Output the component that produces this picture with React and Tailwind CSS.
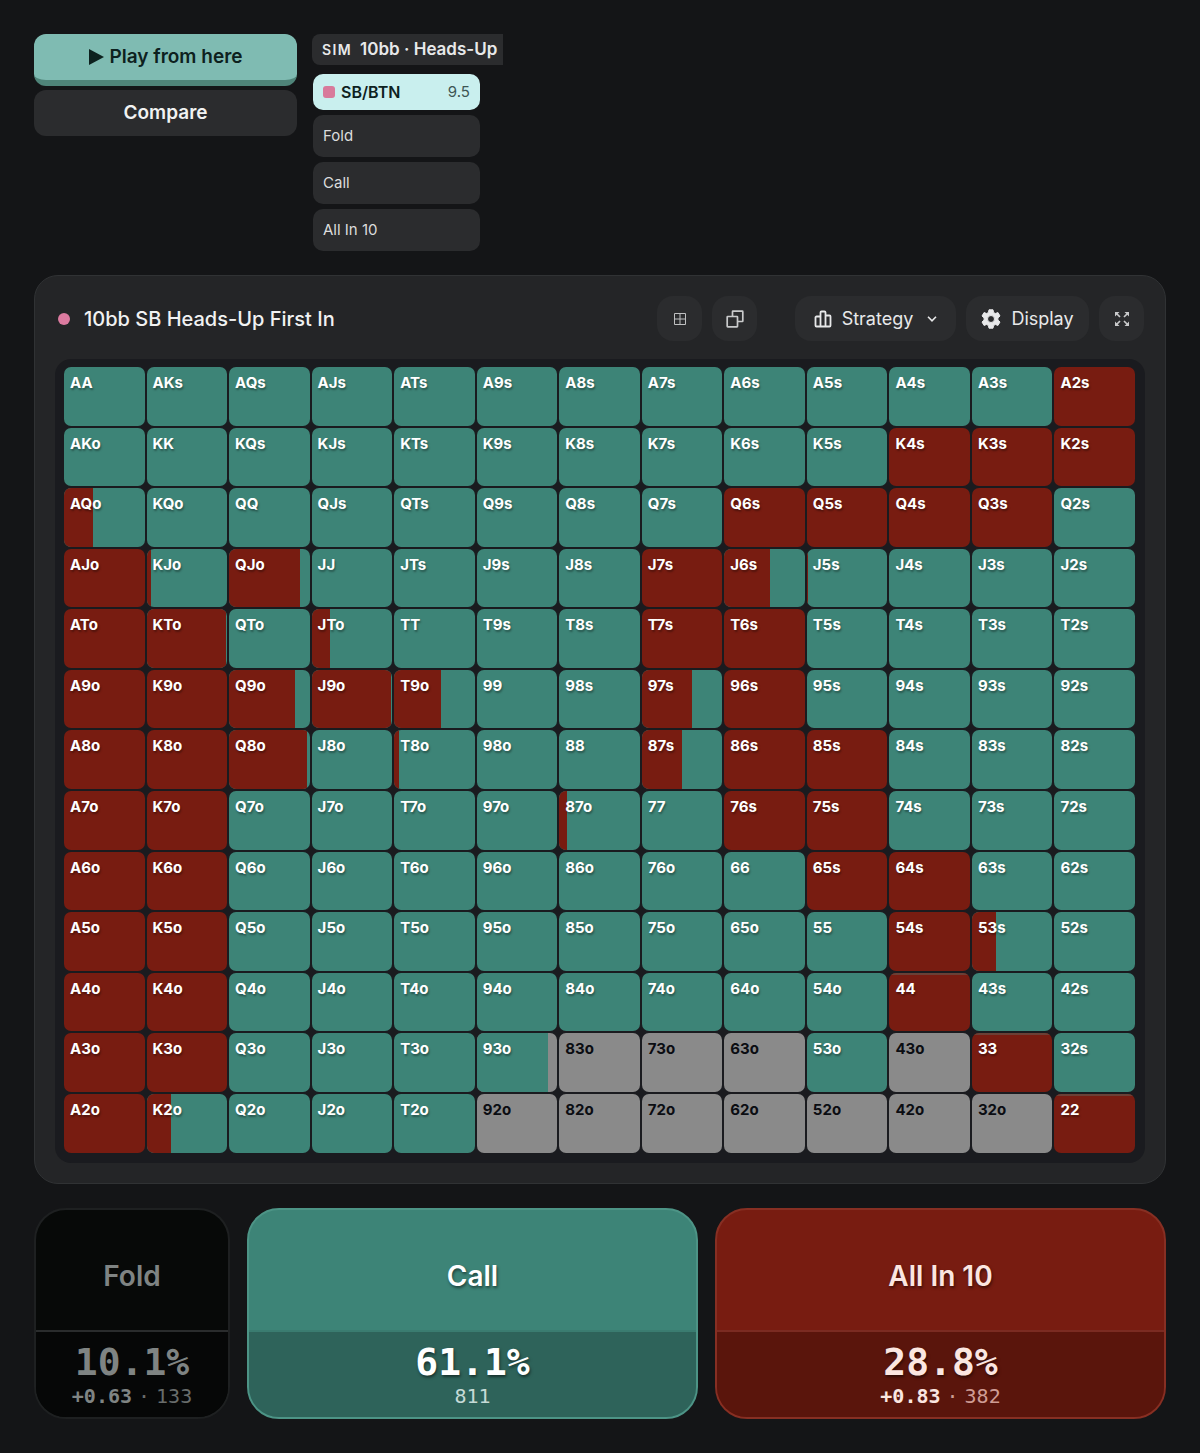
import React from "react";

const RANKS = "AKQJT98765432".split("");

// First letter of each action, row by row: c = call, r = all in, f = fold
const GRID = [
  "ccccccccccccr",
  "ccccccccccrrr",
  "ccccccccrrrrc",
  "rcrccccrrcccc",
  "rrcccccrrcccc",
  "rrrrrccrrcccc",
  "rrrccccrrrccc",
  "rrccccccrrccc",
  "rrcccccccrrcc",
  "rrccccccccrcc",
  "rrccccccccrcc",
  "rrccccfffcfrc",
  "rccccfffffffr",
];

// Mixed hands: [left action, left share in %, right action]
const MIXED = {
  AQo: ["r", 36, "c"],
  KJo: ["r", 6, "c"],
  QJo: ["r", 88, "c"],
  J6s: ["r", 57, "c"],
  J5s: ["r", 2, "c"],
  KTo: ["r", 99, "c"],
  JTo: ["r", 23, "c"],
  Q9o: ["r", 82, "c"],
  J9o: ["r", 98, "c"],
  T9o: ["r", 58, "c"],
  "97s": ["r", 62, "c"],
  Q8o: ["r", 97, "c"],
  T8o: ["r", 6, "c"],
  "87s": ["r", 50, "c"],
  "87o": ["r", 10, "c"],
  "53s": ["r", 30, "c"],
  "93o": ["c", 89, "f"],
  K2o: ["r", 30, "c"],
};

// Hands with a thin strip left open above the action colour
const PARTIAL = ["44", "33", "22"];

const COLORS = {
  c: "bg-[#3d8477]",
  r: "bg-[#781c11]",
  f: "bg-[#8a8a8a]",
};

function handName(row, col) {
  if (row === col) return RANKS[row] + RANKS[col];
  if (col > row) return RANKS[row] + RANKS[col] + "s";
  return RANKS[col] + RANKS[row] + "o";
}

const HandCell = ({ hand, action }) => {
  const mixed = MIXED[hand];
  const base = mixed ? mixed[2] : action;
  const dark = action === "f";

  return (
    <button
      className={`relative aspect-[11/8] overflow-hidden rounded-[7px] text-left ${COLORS[base]}`}
    >
      {mixed && (
        <span
          className={`absolute inset-y-0 left-0 ${COLORS[mixed[0]]}`}
          style={{ width: `${mixed[1]}%` }}
        />
      )}
      {PARTIAL.includes(hand) && (
        <span className="absolute inset-x-0 top-0 h-0.5 bg-[#6a4036]" />
      )}
      <span
        className={`absolute left-1.5 top-1.5 text-[15px] leading-5 font-bold ${
          dark ? "text-[#0b0d12]" : "text-white text-shadow-[1px_2px_2px_rgb(0_0_0/0.35)]"
        }`}
      >
        {hand}
      </span>
    </button>
  );
};

const GridIcon = () => (
  <svg viewBox="0 0 12 12" className="size-3" fill="none" stroke="#bfc0c1">
    <path d="M.5 .5h11v11h-11zM6 .5v11M.5 6h11" />
  </svg>
);

const CopyIcon = () => (
  <svg viewBox="0 0 18 18" className="size-[18px]" fill="none" stroke="#c9cacb" strokeWidth="1.7" strokeLinejoin="round">
    <rect x="1.2" y="6.5" width="10.3" height="10.3" rx=".5" />
    <path d="M6.500 6.500V1.700a.5.5 0 0 1 .5-.5h9.300a.5.5 0 0 1 .5.5V11a.5.5 0 0 1-.5.5h-4.800" />
  </svg>
);

const BarsIcon = () => (
  <svg viewBox="0 0 18 18" className="size-[18px]" fill="none" stroke="#e8e9ea" strokeWidth="1.8" strokeLinejoin="round">
    <path d="M6.500 16.500h-4a1 1 0 0 1-1-1V7.500a1 1 0 0 1 1-1h4M6.500 16.500v-14a1 1 0 0 1 1-1h3a1 1 0 0 1 1 1v14zM11.500 5.500h4a1 1 0 0 1 1 1v9a1 1 0 0 1-1 1h-4" />
  </svg>
);

const GearIcon = () => (
  <svg viewBox="0 0 20 20" className="size-5" fill="#e8e9ea" stroke="#e8e9ea" strokeLinejoin="round">
    <path
      fillRule="evenodd"
      d="M8 .8h4l.6 2.700 1.700 1 2.700-.9 2 3.400-2.100 1.900v2.200l2.100 1.900-2 3.400-2.700-.9-1.700 1-.6 2.700H8l-.6-2.700-1.700-1-2.700.9-2-3.400 2.100-1.900V8.900L1 7l2-3.400 2.700.9 1.700-1zM10 6.500a3.500 3.500 0 1 0 0 7 3.500 3.500 0 0 0 0-7z"
    />
  </svg>
);

const ExpandIcon = () => (
  <svg viewBox="0 0 16 16" className="size-4" fill="#c9cacb" stroke="#c9cacb" strokeWidth="1.7">
    <path d="M1 5.500V1h4.500zM10.500 1H15v4.500zM15 10.500V15h-4.500zM5.500 15H1v-4.500z" stroke="none" />
    <path d="M2 2l4 4M14 2l-4 4M14 14l-4-4M2 14l4-4" />
  </svg>
);

const ChevronIcon = () => (
  <svg viewBox="0 0 10 6" className="ml-1 w-2.5" fill="none" stroke="#e8e9ea" strokeWidth="1.6">
    <path d="M1 .8l4 4 4-4" />
  </svg>
);

const toolButton = "flex h-[45px] items-center justify-center rounded-2xl bg-[#2b2c2e]";

const ACTIONS = [
  {
    name: "Fold",
    percent: "10.1%",
    ev: "+0.63",
    combos: "133",
    grow: "w-[196px] shrink-0",
    card: "border-[#1e2021] bg-[#070908] text-[#7f8483]",
    footer: "border-[#2a2c2d] bg-[#060707]",
    muted: "text-[#686c6b]",
  },
  {
    name: "Call",
    percent: "61.1%",
    combos: "811",
    grow: "flex-1",
    card: "border-[#4d9486] bg-[#3d8477] text-white text-shadow-[1px_2px_3px_rgb(0_0_0/0.5)]",
    footer: "border-[#3a7c70] bg-[#2e635a]",
    muted: "text-[#c5dad6]",
  },
  {
    name: "All In 10",
    percent: "28.8%",
    ev: "+0.83",
    combos: "382",
    grow: "flex-1",
    card: "border-[#872f23] bg-[#781c11] text-[#fbe6e1] text-shadow-[1px_2px_3px_rgb(0_0_0/0.5)]",
    footer: "border-[#7b2b22] bg-[#5a150c]",
    muted: "text-[#cf9c94]",
  },
];

const ActionCard = ({ action }) => (
  <button
    className={`flex flex-col overflow-hidden rounded-[32px] border-2 ${action.grow} ${action.card}`}
  >
    <span className="flex h-[120px] w-full items-center justify-center pt-3 text-[28px] leading-8 font-semibold">
      {action.name}
    </span>
    <span
      className={`flex w-full flex-col items-center border-t-2 pt-2 pb-[9px] font-['DejaVu_Sans_Mono',monospace] ${action.footer}`}
    >
      <span className="text-[38px] leading-11 font-bold">{action.percent}</span>
      <span className="flex gap-1.5 text-xl leading-6 text-shadow-none">
        {action.ev && (
          <>
            <span className="font-bold">{action.ev}</span>
            <span className={action.muted}>·</span>
          </>
        )}
        <span className={action.muted}>{action.combos}</span>
      </span>
    </span>
  </button>
);

const App = () => {
  return (
    <div className="min-h-screen bg-[#141517] p-[34px] font-['Inter',sans-serif] text-[#e8e9ea]">
      <div className="flex items-start gap-[15px]">
        <div className="flex w-[263px] flex-col gap-1">
          <button className="flex h-[52px] items-center justify-center gap-1.5 rounded-xl border-b-[6px] border-[#4f8479] bg-[#7fbbb2] text-[19px] font-semibold text-[#0d211e]">
            <svg viewBox="0 0 15 16" className="h-4 w-[15px]" fill="currentColor">
              <path d="M0 0l15 8-15 8z" />
            </svg>
            Play from here
          </button>
          <button className="h-[46px] rounded-xl bg-[#2b2c2e] text-[19px] font-semibold text-[#f1f2f2]">
            Compare
          </button>
        </div>

        <div className="flex flex-col items-start">
          <div className="flex h-[31px] items-center gap-2 rounded-l-lg bg-[#2b2c2e] pr-1.5 pl-2.5">
            <span className="text-sm font-semibold tracking-widest">SIM</span>
            <span className="text-[17px] font-semibold">10bb · Heads-Up</span>
          </div>
          <div className="mt-[9px] ml-px flex w-[167px] flex-col gap-[5px]">
            <button className="flex h-9 items-center rounded-[10px] bg-[#c9efee] px-2.5 text-[#0d211e]">
              <span className="size-3 rounded-[3px] bg-[#d87a9b]" />
              <span className="ml-1.5 text-base font-semibold">SB/BTN</span>
              <span className="ml-auto text-[15px] text-[#3d5654]">9.5</span>
            </button>
            {["Fold", "Call", "All In 10"].map((name) => (
              <button
                key={name}
                className="h-[42px] rounded-[10px] bg-[#2b2c2e] px-2.5 text-left text-[15px] text-[#dcdddd]"
              >
                {name}
              </button>
            ))}
          </div>
        </div>
      </div>

      <section className="mt-6 rounded-3xl border border-[#303234] bg-[#242527] p-5">
        <header className="flex items-center pr-px pl-[3px]">
          <span className="size-3 rounded-full bg-[#dc7ba0]" />
          <h1 className="ml-3.5 text-xl font-medium text-[#f1f2f2]">10bb SB Heads-Up First In</h1>
          <div className="ml-auto flex gap-2.5">
            <button aria-label="Grid" className={`${toolButton} w-[45px]`}>
              <GridIcon />
            </button>
            <button aria-label="Copy" className={`${toolButton} w-[45px]`}>
              <CopyIcon />
            </button>
            <button className={`${toolButton} ml-7 w-[161px] gap-2.5 text-lg`}>
              <BarsIcon />
              Strategy
              <ChevronIcon />
            </button>
            <button className={`${toolButton} w-[123px] gap-2.5 text-lg`}>
              <GearIcon />
              Display
            </button>
            <button aria-label="Fullscreen" className={`${toolButton} w-[45px]`}>
              <ExpandIcon />
            </button>
          </div>
        </header>

        <div className="mt-[18px] grid grid-cols-13 gap-0.5 rounded-2xl bg-[#1a1b1f] pt-2 pr-2.5 pb-2.5 pl-[9px]">
          {GRID.map((line, row) =>
            line.split("").map((action, col) => {
              const hand = handName(row, col);
              return <HandCell key={hand} hand={hand} action={action} />;
            })
          )}
        </div>
      </section>

      <div className="mt-6 flex gap-[17px]">
        {ACTIONS.map((action) => (
          <ActionCard key={action.name} action={action} />
        ))}
      </div>
    </div>
  );
};

export default App;
